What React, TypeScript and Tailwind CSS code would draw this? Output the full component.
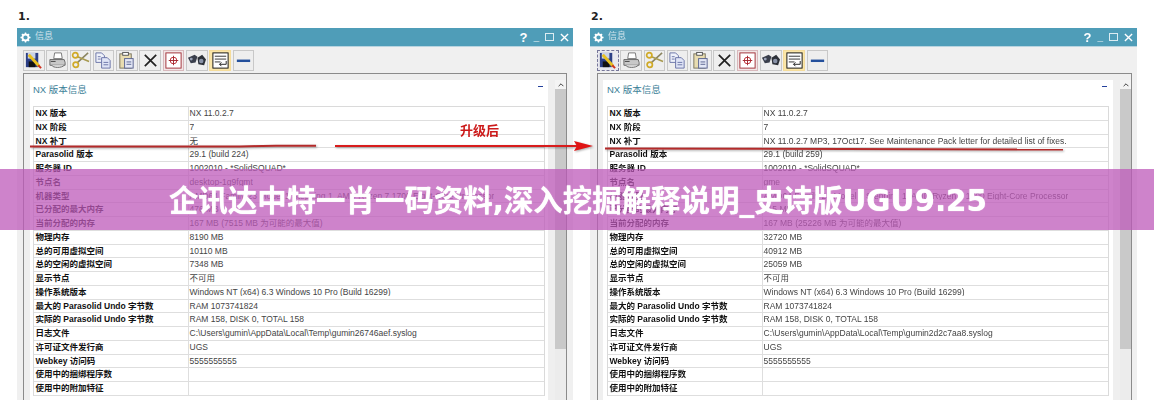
import type { ReactNode } from 'react'

const FONT = "font-['Liberation_Sans','Noto_Sans_CJK_SC',sans-serif]"

type Row = [string, string]

const leftRows: Row[] = [
  ['NX 版本', 'NX 11.0.2.7'],
  ['NX 阶段', '7'],
  ['NX 补丁', '无'],
  ['Parasolid 版本', '29.1 (build 224)'],
  ['服务器 ID', '1002010 - *SolidSQUAD*'],
  ['节点名', 'desktop-1g9fgmt'],
  ['机器类型', 'AMD64 Family 23 Model 1 Stepping 1, AMD Ryzen 7 1700 Eight-Core Processor'],
  ['已分配的最大内存', '476 MB'],
  ['当前分配的内存', '167 MB (7515 MB 为可能的最大值)'],
  ['物理内存', '8190 MB'],
  ['总的可用虚拟空间', '10110 MB'],
  ['总的空闲的虚拟空间', '7348 MB'],
  ['显示节点', '不可用'],
  ['操作系统版本', 'Windows NT (x64) 6.3 Windows 10 Pro (Build 16299)'],
  ['最大的 Parasolid Undo 字节数', 'RAM 1073741824'],
  ['实际的 Parasolid Undo 字节数', 'RAM 158, DISK 0, TOTAL 158'],
  ['日志文件', 'C:\\Users\\gumin\\AppData\\Local\\Temp\\gumin26746aef.syslog'],
  ['许可证文件发行商', 'UGS'],
  ['Webkey 访问码', '5555555555'],
  ['使用中的捆绑程序数', ''],
  ['使用中的附加特征', ''],
]

const rightRows: Row[] = leftRows.map(([label, value]) => {
  const changed: Record<string, string> = {
    'NX 补丁': 'NX 11.0.2.7 MP3, 17Oct17. See Maintenance Pack letter for detailed list of fixes.',
    'Parasolid 版本': '29.1 (build 259)',
    节点名: 'gme',
    已分配的最大内存: '115 MB',
    当前分配的内存: '167 MB (25226 MB 为可能的最大值)',
    物理内存: '32720 MB',
    总的可用虚拟空间: '40912 MB',
    总的空闲的虚拟空间: '25059 MB',
    日志文件: 'C:\\Users\\gumin\\AppData\\Local\\Temp\\gumin2d2c7aa8.syslog',
  }
  return [label, changed[label] ?? value]
})

const toolIcons: ReactNode[] = [
  <>
    <rect x="2" y="2" width="13" height="15" fill="#2c3f86" />
    <rect x="4" y="2" width="8" height="6" fill="#c9d3e8" />
    <rect x="5" y="11" width="7" height="6" fill="#111" />
    <path d="M5 4l11 12" stroke="#e8c020" strokeWidth="3" />
    <path d="M15 15l3 3" stroke="#d03020" strokeWidth="2" />
  </>,
  <>
    <path d="M7 2h7l1 6H6z" fill="#fff" stroke="#777" />
    <path d="M2 9h15l1 3v3H2z" fill="#c8c8c8" stroke="#666" />
    <path d="M4 15c1 3 11 3 13 0" fill="#e8e8e8" stroke="#666" />
    <path d="M3 11h5" stroke="#444" />
  </>,
  <>
    <path d="M18 2L7 12" stroke="#8a8460" strokeWidth="1.600" fill="none" />
    <path d="M19 11L7 6" stroke="#a89a50" strokeWidth="1.600" fill="none" />
    <circle cx="5" cy="14.500" r="2.800" fill="none" stroke="#d0aa28" strokeWidth="1.800" />
    <circle cx="4.500" cy="4.500" r="2.800" fill="none" stroke="#d0aa28" strokeWidth="1.800" />
  </>,
  <>
    <path d="M2 2h6l3 3v7H2z" fill="#eef1fa" stroke="#6a74a8" />
    <path d="M8 7h6l3 3v8H8z" fill="#dfe4f6" stroke="#6a74a8" />
    <path d="M10 12h5M10 14.500h5M4 6h3M4 8.500h3" stroke="#6a74a8" />
  </>,
  <>
    <rect x="3" y="3" width="12" height="15" fill="#e8dcb0" stroke="#7a7460" />
    <rect x="6" y="1.500" width="6" height="3" fill="#fff" stroke="#555" />
    <rect x="8" y="8" width="9" height="10" fill="#e4e8f6" stroke="#5a6490" />
    <path d="M10 11.500h5M10 14h5" stroke="#5a6490" />
  </>,
  <path d="M4 4l12 12M16 4L4 16" stroke="#222" strokeWidth="1.800" />,
  <>
    <rect x="2" y="2" width="16" height="16" fill="#fff" stroke="#a03038" />
    <circle cx="10" cy="10" r="3.500" fill="none" stroke="#c03038" />
    <path d="M10 5v10M5 10h10" stroke="#a02830" />
  </>,
  <>
    <path d="M1 7l7-3 3 2-2 6-5 1z" fill="#3a3f4c" />
    <path d="M11 7l5-3 4 5-2 6-6-1z" fill="#2c3038" />
    <circle cx="15" cy="10.500" r="2.400" fill="#8a93a8" />
    <circle cx="4.500" cy="8.500" r="1.500" fill="#9aa3b8" />
  </>,
  <>
    <rect x="2" y="2" width="16" height="16" fill="#fff" stroke="#111" />
    <path d="M4 5.500h12M4 8.500h12M4 11.500h6" stroke="#333" />
    <path d="M16 10.500v3.500H9m2-2l-2 2 2 2" fill="none" stroke="#222" />
  </>,
  <rect x="3" y="9" width="14" height="2.600" fill="#24509c" />,
]

function Toolbar({ focused }: { focused?: boolean }) {
  return (
    <div className="flex h-[26px] items-start gap-[1.8px] bg-[#f0f0f0] pt-[3px]">
      {toolIcons.map((icon, i) => (
        <div
          key={i}
          className={
            'flex h-[21px] w-[21.5px] shrink-0 items-center justify-center border ' +
            (i === 8
              ? 'border-[#f5dc9a] bg-[#fbe6a8]'
              : i === 6
                ? 'border-[#d8b8bc] bg-[#f2e6e6]'
                : i === 0 && focused
                  ? 'border-dashed border-[#77779a] bg-[#e8e8ee]'
                  : 'border-[#c8c8c8] bg-[#eeeeee]')
          }
        >
          <svg viewBox="0 0 20 20" className="h-[19px] w-[19px]">
            {icon}
          </svg>
        </div>
      ))}
    </div>
  )
}

function Scrollbar() {
  return (
    <div className="flex w-[11px] shrink-0 flex-col bg-[#ececec]">
      <div className="flex h-[9px] items-center justify-center bg-[#f4f4f4]">
        <svg viewBox="0 0 10 6" className="h-[4px] w-[6px]">
          <path d="M1 5l4-4 4 4" fill="none" stroke="#333" strokeWidth="1.500" />
        </svg>
      </div>
      <div className="h-[260px] bg-[#c9c9c9]" />
    </div>
  )
}

function InfoTable({ rows }: { rows: Row[] }) {
  return (
    <div className="border-x border-t border-[#dadada]">
      {rows.map(([label, value]) => (
        <div key={label} className="flex h-[13.76px] items-center border-b border-[#dedede] text-[8.5px] leading-none">
          <div className="w-[154.5px] shrink-0 self-stretch border-r border-[#dedede] pt-[2px] pl-[1.5px] font-bold text-[#111]">
            {label}
          </div>
          <div className="truncate pl-[1px] text-[#444]">{value}</div>
        </div>
      ))}
    </div>
  )
}

function InfoWindow(props: {
  num: string
  rows: Row[]
  className: string
  bodyClass: string
  panelClass: string
  focused?: boolean
}) {
  return (
    <section className={props.className}>
      <div className="h-[28px] pt-[10px] pl-[1px] font-['DejaVu_Sans',sans-serif] text-[11px] leading-[14px] font-bold text-[#222]">
        {props.num}
      </div>
      <div className="flex h-[19px] items-center border-b border-[#b8d4e0] bg-[#4f9db8] pl-[3px] text-white">
        <svg viewBox="0 0 12 12" className="h-[11px] w-[11px]">
          <circle cx="6" cy="6" r="3.300" fill="none" stroke="#fff" strokeWidth="2" />
          <path d="M6 .5v2M6 9.500v2M.5 6h2M9.500 6h2M2.100 2.100l1.400 1.400M8.500 8.500l1.400 1.400M2.100 9.900l1.400-1.400M8.500 3.500l1.400-1.400" stroke="#fff" strokeWidth="1.500" />
        </svg>
        <span className="ml-[4px] text-[9px] text-[#cfe2ea]">信息</span>
        <div className="ml-auto flex items-center gap-[6px] pr-[4px] leading-none font-bold">
          <span className="text-[13px]">?</span>
          <span className="text-[10px]">_</span>
          <span className="h-[8px] w-[9px] border border-[#dcecf2]" />
          <svg viewBox="0 0 10 10" className="h-[9px] w-[9px]">
            <path d="M1 1l8 8M9 1L1 9" stroke="#fff" strokeWidth="1.500" />
          </svg>
        </div>
      </div>
      <div className={props.bodyClass}>
        <Toolbar focused={props.focused} />
        <div className="flex h-[330px] gap-[7px] border-x border-t border-[#8b8b8b] bg-[#efefef] pt-[6px]">
          <div className={props.panelClass}>
            <div className="flex h-[26px] items-start justify-between pt-[3px] pr-[2px] text-[9.5px] text-[#3d7f98]">
              <span>NX 版本信息</span>
              <span className="mt-[3px] h-[1px] w-[5px] bg-[#24409c]" />
            </div>
            <InfoTable rows={props.rows} />
          </div>
          <Scrollbar />
        </div>
      </div>
    </section>
  )
}

export default function App() {
  return (
    <div className={FONT + ' relative h-[400px] w-[1154px] overflow-hidden bg-white'}>
      <div className="flex items-start pl-[17px] blur-[0.3px]">
        <InfoWindow
          num="1."
          rows={leftRows}
          className="w-[556px] shrink-0 bg-white"
          bodyClass="bg-[#f0f0f0] pl-[6px] pr-[6px]"
          panelClass="min-w-0 flex-1 bg-white px-[3px] ml-[6px]"
        />
        <InfoWindow
          num="2."
          rows={rightRows}
          className="ml-[17px] w-[547px] shrink-0 bg-white"
          bodyClass="bg-[#f0f0f0] pl-[7px] pr-[5px]"
          panelClass="min-w-0 flex-1 bg-white px-[4px] ml-[5px]"
          focused
        />
      </div>

      <svg className="absolute top-0 left-0 h-[400px] w-[1154px] drop-shadow-[1px_1.5px_1px_rgba(0,0,0,0.35)]" viewBox="0 0 1154 400">
        <g fill="none" strokeWidth="2">
          <path d="M30 146.500H240l36-.800h40" stroke="#b42a2a" />
          <path d="M335 146H580" stroke="#d81c1c" />
          <path d="M605 148.500L1063 149.500" stroke="#b42a2a" />
        </g>
        <path d="M574 141l19 5-19 5 3-5z" fill="#e01414" />
      </svg>
      <span className="absolute top-[123px] left-[460px] text-[13px] leading-[16px] font-bold text-[#cc1a1a]">升级后</span>

      <div className="absolute inset-x-0 top-[169px] flex h-[61px] items-center justify-center bg-[rgba(190,90,185,0.75)] pt-[4px]">
        <h1 className="ml-[2px] font-['DejaVu_Sans','Noto_Sans_CJK_SC',sans-serif] text-[29.45px] leading-none font-bold whitespace-nowrap text-white [text-shadow:0_0_1px_#fff]">
          企讯达中特一肖一码资料,深入挖掘解释说明_史诗版UGU9.25
        </h1>
      </div>
    </div>
  )
}
